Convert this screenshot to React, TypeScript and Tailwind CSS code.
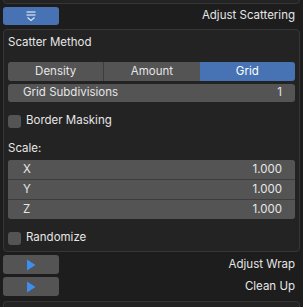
import React from "react";

const Check = ({ label }: { label: string }) => (
  <div className="flex items-center gap-[5px] h-[14px]">
    <div className="w-[13px] h-[13px] rounded-[3px] bg-[#545454]" />
    <span>{label}</span>
  </div>
);

const Play = () => (
  <svg width="10" height="12" viewBox="0 0 10 12">
    <path d="M1 0.5 L9.5 6 L1 11.5 Z" fill="#3d8ef0" />
  </svg>
);

const Field = ({ label, value, cls }: { label: string; value: string; cls: string }) => (
  <div className={`flex items-center justify-between bg-[#545454] pl-[15px] pr-[13px] ${cls}`}>
    <span>{label}</span>
    <span>{value}</span>
  </div>
);

export default function App() {
  return (
    <div
      className="w-[303px] h-[307px] bg-[#1d1d1d] text-[#e6e6e6] text-[11.5px] leading-none overflow-hidden"
      style={{ fontFamily: "Inter, 'DejaVu Sans', sans-serif" }}
    >
      <div className="mx-[3px] h-[4px] border-x border-b border-[#353535] rounded-b-[4px] bg-[#232323]" />
      <div className="flex items-center justify-between pl-[3px] pr-[8px] mt-[3px] h-[18px]">
        <div className="w-[56px] h-[18px] rounded-[3px] bg-[#4772b3] flex items-center justify-center">
          <svg width="12" height="12" viewBox="0 0 12 12" fill="none" stroke="#dce6f5" strokeWidth="1.2">
            <path d="M1.5 2 H10.5" />
            <path d="M1.5 5 H10.5" />
            <path d="M2.5 7.5 L6 10.5 L9.5 7.5" />
          </svg>
        </div>
        <span>Adjust Scattering</span>
      </div>
      <div className="mx-[3px] mt-[4px] h-[223px] border border-[#363636] rounded-[4px] bg-[#232323] px-[4px] flex flex-col">
        <div className="mt-[7px] h-[12px] flex items-center">Scatter Method</div>
        <div className="mt-[13px] h-[19px] flex rounded-[3px] overflow-hidden">
          <div className="flex-1 bg-[#545454] flex items-center justify-center border-r border-[#3d3d3d]">Density</div>
          <div className="flex-1 bg-[#545454] flex items-center justify-center">Amount</div>
          <div className="flex-1 bg-[#4772b3] flex items-center justify-center text-white">Grid</div>
        </div>
        <Field label="Grid Subdivisions" value="1" cls="mt-[3px] h-[18px] rounded-[3px]" />
        <div className="mt-[12px]">
          <Check label="Border Masking" />
        </div>
        <div className="mt-[15px] h-[12px] flex items-center">Scale:</div>
        <div className="mt-[5px] flex flex-col gap-[1px] bg-[#3d3d3d] rounded-[3px] overflow-hidden">
          <Field label="X" value="1.000" cls="h-[19px]" />
          <Field label="Y" value="1.000" cls="h-[19px]" />
          <Field label="Z" value="1.000" cls="h-[19px]" />
        </div>
        <div className="mt-[12px]">
          <Check label="Randomize" />
        </div>
      </div>
      <div className="flex items-center justify-between pl-[3px] pr-[8px] mt-[3px] h-[19px]">
        <div className="w-[56px] h-[19px] rounded-[3px] bg-[#545454] flex items-center justify-center">
          <Play />
        </div>
        <span>Adjust Wrap</span>
      </div>
      <div className="flex items-center justify-between pl-[3px] pr-[8px] mt-[3px] h-[19px]">
        <div className="w-[56px] h-[19px] rounded-[3px] bg-[#545454] flex items-center justify-center">
          <Play />
        </div>
        <span>Clean Up</span>
      </div>
      <div className="mx-[3px] mt-[5px] h-[8px] border-x border-t border-[#353535] rounded-t-[4px] bg-[#232323]" />
    </div>
  );
}
